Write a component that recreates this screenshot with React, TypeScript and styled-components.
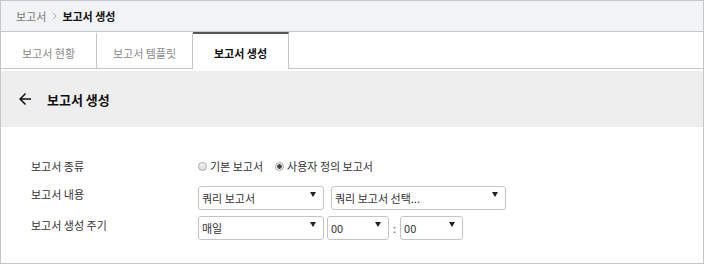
import styled, { createGlobalStyle } from "styled-components";

const GlobalStyle = createGlobalStyle`
  html, body {
    margin: 0;
    padding: 0;
    background: #ffffff;
  }
  body {
    font-family: "Noto Sans CJK KR", "Noto Sans", sans-serif;
    color: #333333;
  }
`;

export default function App() {
  return (
    <>
      <GlobalStyle />
      <Frame>
        <Breadcrumb>
          <Crumb>보고서</Crumb>
          <CrumbSep>
            <svg viewBox="0 0 6 10" width="5" height="8">
              <path d="M1 1l4 4-4 4" fill="none" stroke="#999" strokeWidth="1" />
            </svg>
          </CrumbSep>
          <Crumb $current>보고서 생성</Crumb>
        </Breadcrumb>

        <TabBar>
          <Tab>보고서 현황</Tab>
          <Tab>보고서 템플릿</Tab>
          <Tab $active>보고서 생성</Tab>
        </TabBar>

        <Header>
          <BackButton aria-label="뒤로">
            <svg viewBox="0 0 24 24" width="18" height="18">
              <path
                d="M20 11H7.83l5.59-5.59L12 4l-8 8 8 8 1.41-1.41L7.83 13H20v-2z"
                fill="#111"
              />
            </svg>
          </BackButton>
          <Title>보고서 생성</Title>
        </Header>

        <Form>
          <Label $lift={3}>보고서 종류</Label>
          <Controls $lift={3}>
            <RadioOption>
              <RadioDot />
              기본 보고서
            </RadioOption>
            <RadioOption>
              <RadioDot $checked />
              사용자 정의 보고서
            </RadioOption>
          </Controls>

          <Label $lift={8}>보고서 내용</Label>
          <Controls $gap={7}>
            <Select $width={126}>
              <span>쿼리 보고서</span>
              <Caret />
            </Select>
            <Select $width={175}>
              <span>쿼리 보고서 선택...</span>
              <Caret />
            </Select>
          </Controls>

          <Label $lift={6}>보고서 생성 주기</Label>
          <Controls $gap={3}>
            <Select $width={126}>
              <span>매일</span>
              <Caret />
            </Select>
            <Select $width={62}>
              <span>00</span>
              <Caret />
            </Select>
            <Colon>:</Colon>
            <Select $width={63}>
              <span>00</span>
              <Caret />
            </Select>
          </Controls>
        </Form>
      </Frame>
    </>
  );
}

const Frame = styled.div`
  width: 704px;
  height: 264px;
  box-sizing: border-box;
  border: 1px solid #c6c6c6;
  display: flex;
  flex-direction: column;
  overflow: hidden;
`;

const Breadcrumb = styled.div`
  height: 29px;
  display: flex;
  align-items: center;
  gap: 4px;
  padding: 0 0 1px 15px;
  background: #f2f3f5;
  border-bottom: 1px solid #c6c6c6;
  font-size: 11px;
`;

const Crumb = styled.span<{ $current?: boolean }>`
  color: ${p => (p.$current ? "#111" : "#777")};
  font-weight: ${p => (p.$current ? 700 : 400)};
`;

const CrumbSep = styled.span`
  display: flex;
  align-items: center;
  padding: 1px 1px 0 2px;
`;

const TabBar = styled.div`
  display: flex;
  height: 36px;
  border-bottom: 1px solid #c6c6c6;
`;

const Tab = styled.div<{ $active?: boolean }>`
  width: 96px;
  box-sizing: border-box;
  display: flex;
  align-items: center;
  justify-content: center;
  padding-top: 3px;
  border-right: 1px solid #c6c6c6;
  border-top: 2px solid ${p => (p.$active ? "#555" : "transparent")};
  background: #fff;
  font-size: 11px;
  color: ${p => (p.$active ? "#111" : "#888")};
  font-weight: ${p => (p.$active ? 700 : 400)};
  margin-bottom: ${p => (p.$active ? "-1px" : "0")};
  height: ${p => (p.$active ? "37px" : "36px")};
`;

const Header = styled.div`
  margin-top: 2px;
  height: 56px;
  display: flex;
  align-items: center;
  padding-left: 15px;
  gap: 11px;
  background: #eeeeee;
`;

const BackButton = styled.div`
  display: flex;
  align-items: center;
  width: 20px;
  height: 20px;
`;

const Title = styled.div`
  font-size: 13px;
  font-weight: 700;
  color: #111;
`;

const Form = styled.div`
  display: grid;
  grid-template-columns: 167px auto;
  grid-auto-rows: 23px;
  row-gap: 7px;
  align-items: center;
  padding: 29px 0 0 30px;
`;

const Label = styled.div<{ $lift?: number }>`
  font-size: 11px;
  color: #333;
  margin-bottom: ${p => p.$lift ?? 0}px;
`;

const Controls = styled.div<{ $gap?: number; $lift?: number }>`
  display: flex;
  align-items: center;
  gap: ${p => p.$gap ?? 12}px;
  margin-bottom: ${p => p.$lift ?? 0}px;
`;

const RadioOption = styled.label`
  display: flex;
  align-items: center;
  gap: 3px;
  font-size: 11px;
  color: #333;
`;

const RadioDot = styled.span<{ $checked?: boolean }>`
  width: 9px;
  height: 9px;
  box-sizing: border-box;
  border-radius: 50%;
  border: 1px solid #a8a8a8;
  background: ${p =>
    p.$checked
      ? "radial-gradient(circle, #444 0 2px, #f0f0f0 2.5px)"
      : "linear-gradient(#f4f4f4, #dcdcdc)"};
`;

const Select = styled.div<{ $width: number }>`
  width: ${p => p.$width}px;
  height: 24px;
  box-sizing: border-box;
  border: 1px solid #c4c4c4;
  border-radius: 3px;
  background: #fff;
  display: flex;
  justify-content: space-between;
  padding: 0 7px 0 3px;
  align-items: center;
  font-size: 11px;
  color: #333;
`;

const Caret = styled.span`
  width: 0;
  height: 0;
  border-left: 3.5px solid transparent;
  border-right: 3.5px solid transparent;
  border-top: 5px solid #222;
  margin-bottom: 6px;
`;

const Colon = styled.span`
  font-size: 11px;
  color: #555;
  padding: 0 1px;
`;
